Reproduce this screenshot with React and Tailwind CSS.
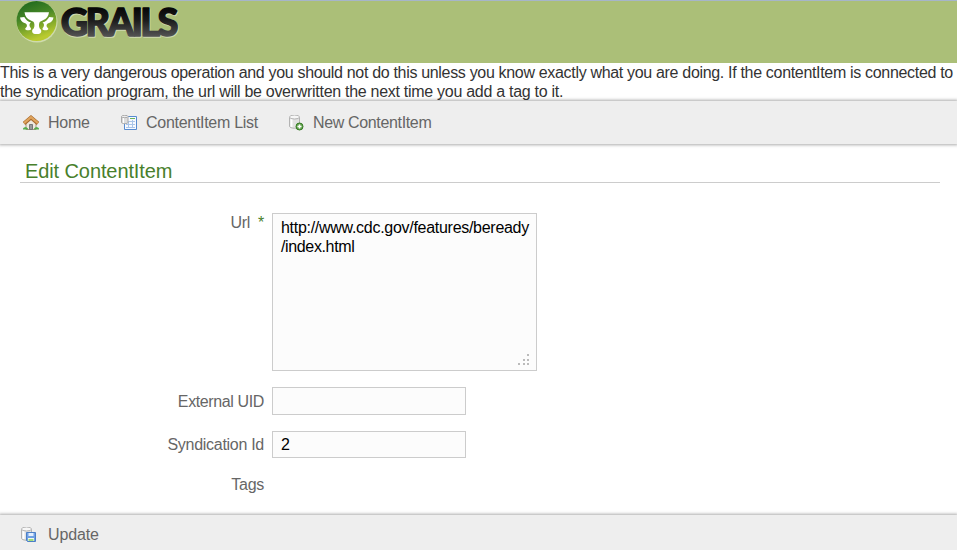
const Database = () => (
  <>
    <path d="M1.500 3v9c0 3 10 3 10 0V3" fill="#e2e2e2" stroke="#b3b3b3" />
    <path d="M3.500 5v8" stroke="#fff" strokeWidth="2" />
    <ellipse cx="6.500" cy="3" rx="5" ry="2" fill="#f7f7f7" stroke="#b3b3b3" />
  </>
);

const Icon = ({ children }) => (
  <svg className="block h-4 w-4 shrink-0" viewBox="0 0 16 16" fill="none">{children}</svg>
);

const HomeIcon = () => (
  <Icon>
    <path d="M3 8 8 3.500 13 8v6.500H3z" fill="#eee9df" stroke="#a49682" />
    <path d="M6.500 14.500v-5h3v5z" fill="#999" stroke="#777" />
    <path d="M1 8.500 8 2.500 15 8.500" stroke="#a86a2d" strokeWidth="3.800" />
    <path d="M1 8.200 8 2.200 15 8.200" stroke="#dfa45d" strokeWidth="2.200" />
    <path d="M0 14.500v-1l1-1 2-.500 2 1.500v1zM11 14.500v-1l2-1.500 2 .500 1 1v1z" fill="#55ad4c" />
  </Icon>
);

const ListIcon = () => (
  <Icon>
    <path d="M3.500 1.500h12v13h-12z" fill="#f5f9ff" stroke="#568bd0" />
    <path d="M9 3.500h5" stroke="#6bb35b" />
    <path d="M5 6.500h9M5 9.500h9M5 12.500h9M7.500 6v7M11.500 5v8" stroke="#a9c5e9" />
    <path d="M.500 1.500v6c0 1.500 6.500 1.500 6.500 0v-6" fill="#ddd" stroke="#aaa" />
    <path d="M2.500 2.500V8" stroke="#fff" />
    <ellipse cx="3.750" cy="1.500" rx="3.250" ry="1.200" fill="#eee" stroke="#aaa" />
  </Icon>
);

const AddIcon = () => (
  <Icon>
    <g transform="translate(0 -1)"><Database /></g>
    <circle cx="11.500" cy="11.500" r="3.500" fill="#65a64f" stroke="#347824" />
    <path d="M11.500 9.500v4M9.500 11.500h4" stroke="#fff" strokeWidth="1.500" />
  </Icon>
);

const SaveIcon = () => (
  <Icon>
    <g transform="translate(0 -1)"><Database /></g>
    <path d="M6.500 5.500h9v9h-8l-1-1z" fill="#70a0e4" stroke="#4c7fc6" />
    <path d="M8.500 6h5v3h-5z" fill="#e3efff" />
    <path d="M8 11h6v3H8z" fill="#f3f9ed" />
    <path d="M8.500 13h5" stroke="#86d153" strokeWidth="1.500" />
  </Icon>
);

const Logo = () => (
  <svg className="block" width="190" height="46" viewBox="0 0 190 46">
    <defs>
      <linearGradient id="globe" x1="0" y1="0" x2=".35" y2="1">
        <stop offset="0" stopColor="#17631c" />
        <stop offset=".45" stopColor="#448526" />
        <stop offset="1" stopColor="#b9ca2e" />
      </linearGradient>
      <linearGradient id="letters" gradientUnits="userSpaceOnUse" x1="0" y1="6" x2="0" y2="36">
        <stop offset="0" stopColor="#050505" />
        <stop offset=".45" stopColor="#1c1c1c" />
        <stop offset="1" stopColor="#555" />
      </linearGradient>
    </defs>
    <circle cx="37" cy="21" r="20.500" fill="#cfdbad" />
    <circle cx="36.500" cy="20" r="20" fill="url(#globe)" />
    <g fill="#fff">
      <path d="M24.500 11.300h24.500c-.500 3.700-2.500 6.700-6 8l-3 1.500c-1 1-1.500 4 -.500 6.200.500 1 1.800 1.500 1.800 3.200 0 2-1.800 2.800-4.600 2.800s-4.600-.800-4.600-2.800c0-1.700 1.300-2.200 1.800-3.200 1-2.200.500-5.200-.500-6.200l-3-1.500c-3.500-1.300-5.400-4.300-5.900-8z" />
      <path d="M20 16.500l4.300-.500c1.400 2.700 3.500 4.600 6.700 5.500-1.600 1-1.800 2.300-1.200 4 .500 1.200 1.500 1.700 1.200 2.800-.500 1.200-5.500 1.500-5.800-.300-.200-1.200 1.500-1.500 1.700-2.800.200-1.600-.500-2.500-2.400-3.200-2.500-.800-4-2.500-4.500-5.500z" />
      <path d="M53.500 16.500l-4.300-.500c-1.400 2.700-3.500 4.600-6.700 5.500 1.600 1 1.800 2.300 1.200 4-.500 1.200-1.500 1.700-1.200 2.800.500 1.200 5.500 1.500 5.800-.300.200-1.200-1.500-1.500-1.700-2.800-.200-1.600.500-2.500 2.400-3.200 2.500-.800 4-2.500 4.500-5.500z" />
    </g>
    <g className="font-['Lato',sans-serif] text-[38px] font-black tracking-[-2.7px]" strokeLinejoin="round">
      <text x="61.500" y="35.500" fill="#ced9b0" stroke="#ced9b0" strokeWidth="1.600">GRAILS</text>
      <text x="60.700" y="34.500" fill="url(#letters)" stroke="url(#letters)" strokeWidth="1.400">GRAILS</text>
    </g>
  </svg>
);

const Action = ({ icon, children, width }) => (
  <a className="flex items-center gap-[9px]">
    {icon}
    <span className={`flex h-[19px] ${width}`}>{children}</span>
  </a>
);

const Label = ({ children }) => (
  <label className="flex w-[264px] shrink-0 justify-end text-[#666]">{children}</label>
);

export default function App() {
  return (
    <div className="h-[550px] overflow-hidden bg-white font-['Liberation_Sans',Arial,sans-serif] text-[16px] leading-[19px] tracking-[-0.285px] text-[#333]">
      <header className="h-[63px] border-t border-[#a6b5ca] bg-[#abbf78] tracking-normal"><Logo /></header>
      <p className="h-[38px] whitespace-nowrap">
        <span className="tracking-[-0.322px]">This is a very dangerous operation and you should not do this unless you know exactly what you are doing. If the contentItem is connected to</span><br />
        the syndication program, the url will be overwritten the next time you add a tag to it.
      </p>
      <nav className="flex h-[43px] items-center bg-[#eee] pl-[23px] text-[#666] shadow-[0_0_3px_1px_#aaa]">
        <Action icon={<HomeIcon />} width="w-[73px]">Home</Action>
        <Action icon={<ListIcon />} width="w-[142px]">ContentItem List</Action>
        <Action icon={<AddIcon />} width="w-[130px] tracking-[-0.35px]">New ContentItem</Action>
      </nav>
      <main className="h-[371px]">
        <h1 className="mr-[17px] mb-[30px] ml-5 h-[39px] border-b border-[#ccc] pt-[15px] pl-[5px] text-[20px] leading-[24px] tracking-[-0.1px] text-[#48802c]">Edit ContentItem</h1>
        <form>
          <div className="mb-4 flex gap-2">
            <Label><span>Url</span><span className="ml-2 text-[#48802c]">*</span></Label>
            <div className="flex h-[158px] w-[265px] flex-col justify-between border border-[#ccc] bg-[#fcfcfc] pt-1 pr-[6px] pb-1 pl-2 text-black">
              <div>http://www.cdc.gov/features/beready<br /><span className="tracking-[-0.36px]">/index.html</span></div>
              <svg className="self-end" width="12" height="12" fill="#bbb">
                <path d="M9 0h2v2H9zM5 5h2v2H5zM9 5h2v2H9zM0 9h2v2H0zM5 9h2v2H5zM9 9h2v2H9z" />
              </svg>
            </div>
          </div>
          <div className="mb-4 flex items-center gap-2">
            <Label><span className="tracking-[-0.38px]">External UID</span></Label>
            <div className="h-[28px] w-[194px] border border-[#ccc] bg-[#fcfcfc]" />
          </div>
          <div className="flex items-center gap-2">
            <Label>Syndication Id</Label>
            <div className="flex h-[27px] w-[194px] items-center border border-[#ccc] bg-[#fcfcfc] px-2 text-black">2</div>
          </div>
          <div className="pt-[17px]"><Label>Tags</Label></div>
        </form>
      </main>
      <footer className="flex h-[43px] items-center bg-[#eee] pb-1 pl-5 text-[#666] shadow-[0_0_3px_1px_#aaa]">
        <Action icon={<SaveIcon />} width="w-[60px] pl-[3px] tracking-[-0.15px]">Update</Action>
      </footer>
    </div>
  );
}
